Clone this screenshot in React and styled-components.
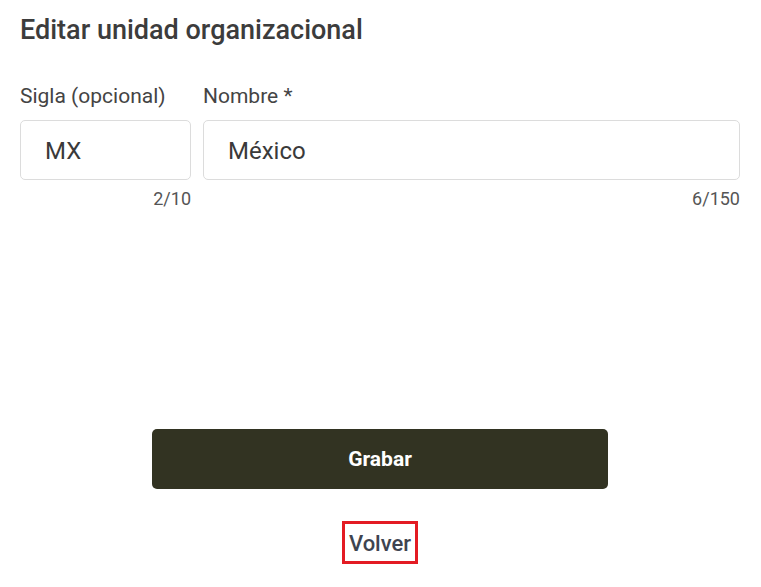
import React from "react";
import styled, { createGlobalStyle } from "styled-components";

const GlobalStyle = createGlobalStyle`
  body {
    margin: 0;
    background: #fff;
    font-family: Roboto, "Liberation Sans", sans-serif;
  }
`;

const Page = styled.div`
  padding: 12px 21px 0 20px;
  color: #3d3d3d;
`;

const Title = styled.h1`
  margin: 0;
  font-size: 27px;
  font-weight: 500;
  line-height: 36px;
  color: #3c3c3c;
`;

const FieldRow = styled.div`
  display: flex;
  gap: 12px;
  margin-top: 34px;
`;

const Field = styled.div`
  display: flex;
  flex-direction: column;
  width: ${(p) => (p.$grow ? "auto" : "171px")};
  flex: ${(p) => (p.$grow ? "1" : "none")};
`;

const Label = styled.label`
  font-size: 21px;
  line-height: 28px;
  color: #444;
  margin-bottom: 10px;
`;

const Input = styled.input`
  box-sizing: border-box;
  height: 60px;
  width: 100%;
  padding: 2px 24px 0;
  border: 1px solid #dcdcdc;
  border-radius: 5px;
  font-family: inherit;
  font-size: 24px;
  color: #3a3a3a;
  outline: none;
`;

const Counter = styled.div`
  text-align: right;
  font-size: 18px;
  line-height: 22px;
  color: #555;
  margin-top: 8px;
`;

const Actions = styled.div`
  display: flex;
  flex-direction: column;
  align-items: center;
  margin-top: 219px;
`;

const SaveButton = styled.button`
  width: 456px;
  height: 60px;
  border: none;
  border-radius: 5px;
  background: #323322;
  color: #fff;
  font-family: inherit;
  font-size: 21px;
  font-weight: 700;
  cursor: pointer;
`;

const BackButton = styled.button`
  margin-top: 32px;
  box-sizing: border-box;
  width: 76px;
  height: 43px;
  border: 3px solid #e31b23;
  background: #fff;
  color: #3e4450;
  font-family: inherit;
  font-size: 22px;
  font-weight: 500;
  padding: 2px 0 0;
  cursor: pointer;
`;

export default function App() {
  return (
    <>
      <GlobalStyle />
      <Page>
        <Title>Editar unidad organizacional</Title>
        <FieldRow>
          <Field>
            <Label>Sigla (opcional)</Label>
            <Input defaultValue="MX" />
            <Counter>2/10</Counter>
          </Field>
          <Field $grow>
            <Label>Nombre *</Label>
            <Input defaultValue="México" />
            <Counter>6/150</Counter>
          </Field>
        </FieldRow>
        <Actions>
          <SaveButton>Grabar</SaveButton>
          <BackButton>Volver</BackButton>
        </Actions>
      </Page>
    </>
  );
}
